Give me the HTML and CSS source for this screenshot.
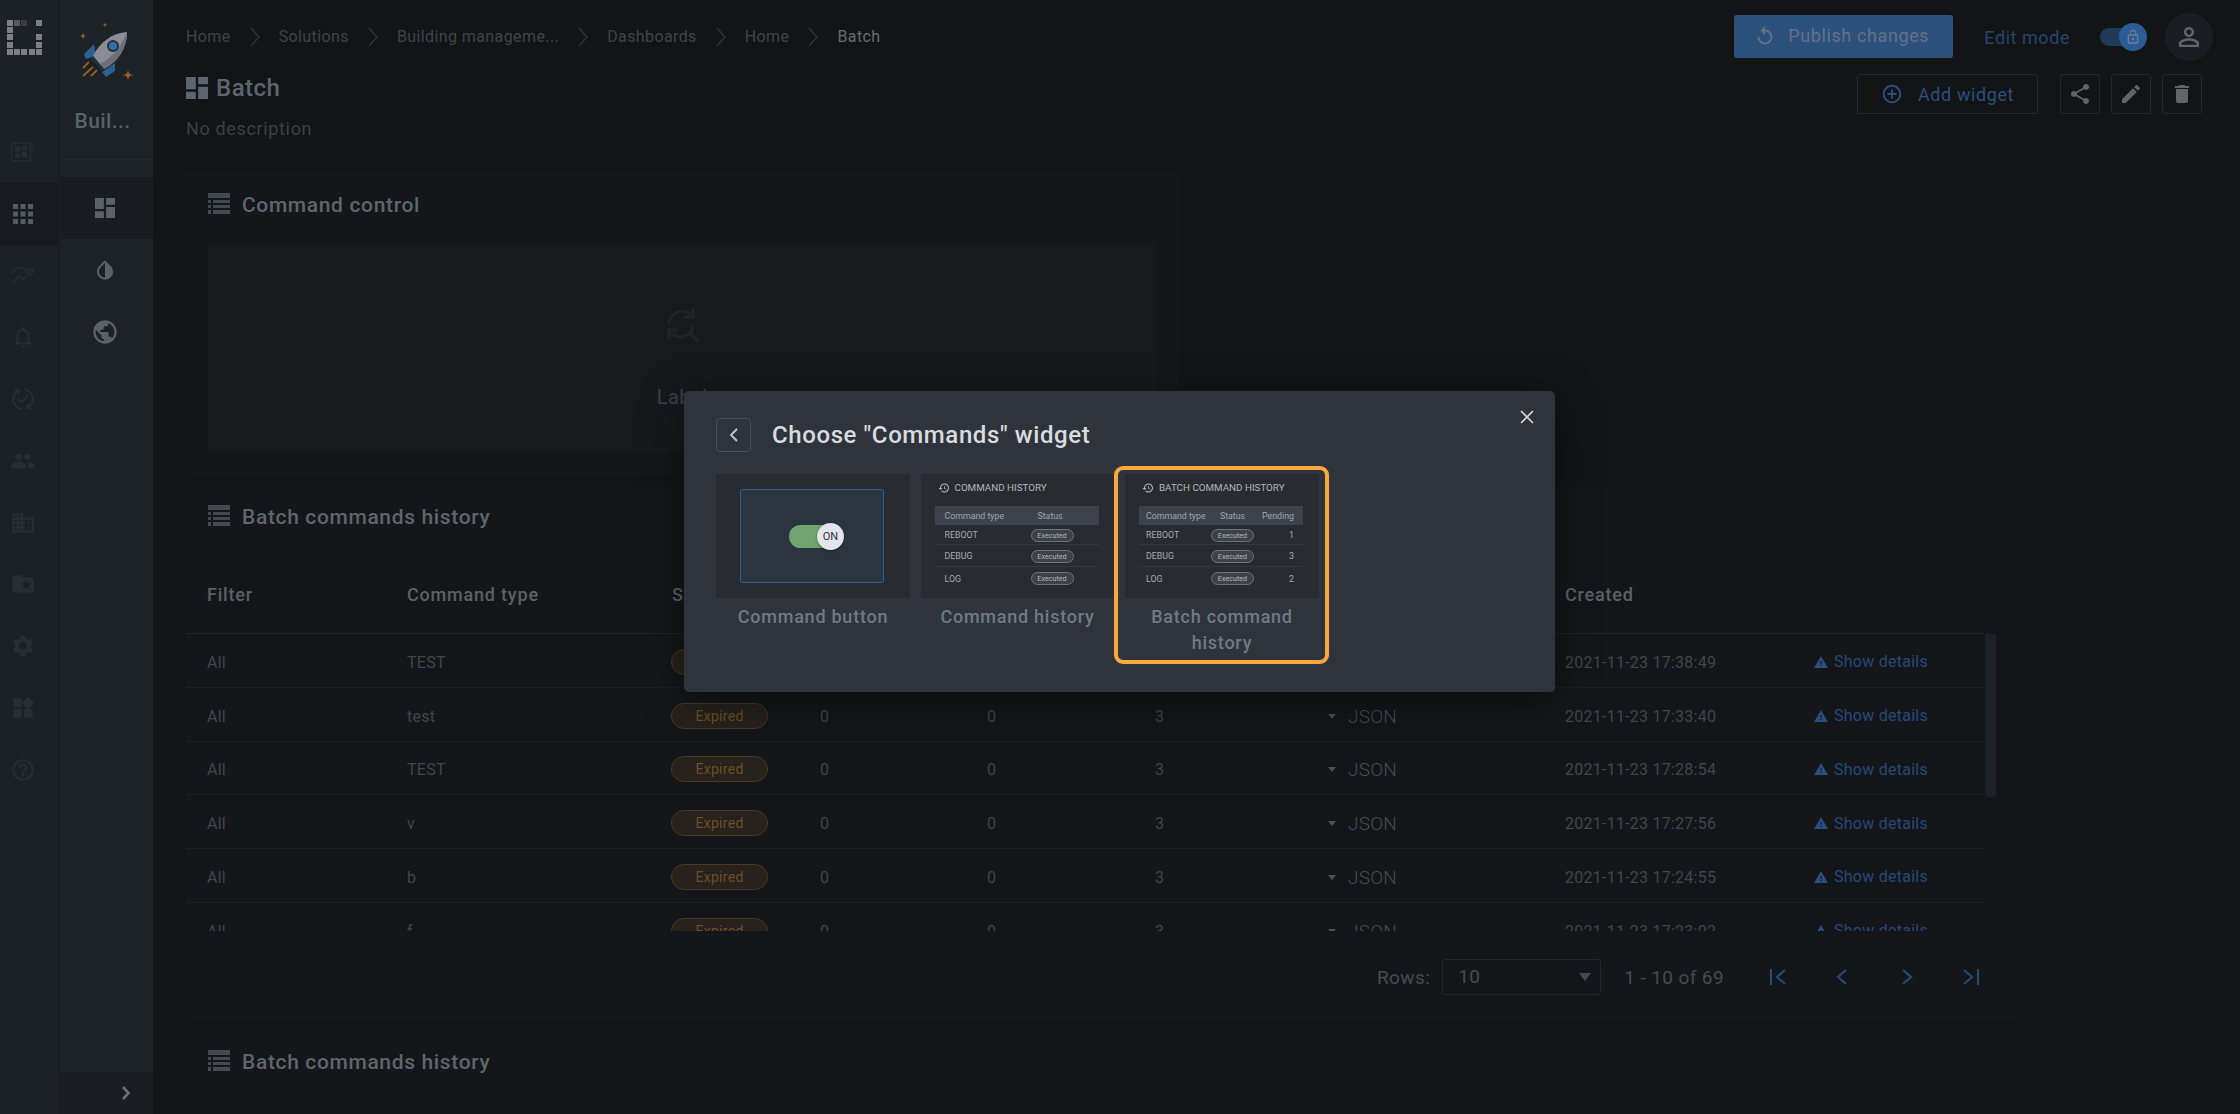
FILE: index.html
```html
<!DOCTYPE html>
<html>
<head>
    <meta charset="utf-8">
    <title>Batch</title>
    <link rel="stylesheet" href="styles.css">
</head>
<body>

<svg class="sprite" xmlns="http://www.w3.org/2000/svg">
    <symbol id="i-dash" viewBox="3 3 18 18"><path d="M3 13h8V3H3v10zm0 8h8v-6H3v6zm10 0h8V11h-8v10zm0-18v6h8V3h-8z"/></symbol>
    <symbol id="i-list" viewBox="0 0 22 22"><path d="M0 0h22v5H0zM0 7h3v3H0zM5 7h17v3H5zM0 12h3v3H0zM5 12h17v3H5zM0 17h3v4H0zM5 17h17v4H5z"/></symbol>
    <symbol id="i-drop" viewBox="0 0 24 24"><path d="M17.66 7.93L12 2.27 6.34 7.93c-3.12 3.12-3.12 8.19 0 11.31C7.9 20.8 9.95 21.58 12 21.58s4.1-.78 5.66-2.34c3.12-3.12 3.12-8.19 0-11.31zM12 19.59c-1.6 0-3.11-.62-4.24-1.76C6.62 16.69 6 15.19 6 13.59s.62-3.11 1.76-4.24L12 5.1v14.49z"/></symbol>
    <symbol id="i-globe" viewBox="0 0 24 24"><path d="M12 2C6.48 2 2 6.48 2 12s4.48 10 10 10 10-4.48 10-10S17.52 2 12 2zm-1 17.93c-3.95-.49-7-3.85-7-7.93 0-.62.08-1.21.21-1.79L9 15v1c0 1.1.9 2 2 2v1.93zm6.9-2.54c-.26-.81-1-1.39-1.9-1.39h-1v-3c0-.55-.45-1-1-1H8v-2h2c.55 0 1-.45 1-1V7h2c1.1 0 2-.9 2-2v-.41c2.93 1.19 5 4.06 5 7.41 0 2.08-.8 3.97-2.1 5.39z"/></symbol>
    <symbol id="i-warn" viewBox="1 2 22 19"><path d="M1 21h22L12 2 1 21zm12-3h-2v-2h2v2zm0-4h-2v-4h2v4z"/></symbol>
    <symbol id="i-history" viewBox="0 0 24 24"><path d="M13 3c-4.97 0-9 4.03-9 9H1l3.89 3.89.07.14L9 12H6c0-3.87 3.13-7 7-7s7 3.13 7 7-3.13 7-7 7c-1.93 0-3.68-.79-4.94-2.06l-1.42 1.42C8.27 19.99 10.51 21 13 21c4.97 0 9-4.03 9-9s-4.03-9-9-9zm-1 5v5l4.28 2.54.72-1.21-3.5-2.08V8H12z"/></symbol>
    <symbol id="i-chev" viewBox="0 0 10 20"><path d="M1 1l8 9-8 9" fill="none" stroke="currentColor" stroke-width="1.6"/></symbol>
</svg>

<div class="app">

    <nav class="rail">
        <div class="rail-logo">
            <svg width="35" height="35" viewBox="0 0 35 35">
                <g fill="#7d8083">
                    <rect x="0" y="0" width="6" height="6"/><rect x="29" y="0" width="6" height="6"/>
                    <rect x="0" y="7" width="6" height="6"/><rect x="0" y="14" width="6" height="6"/><rect x="0" y="22" width="6" height="6"/>
                    <rect x="0" y="29" width="6" height="6"/><rect x="7" y="29" width="6" height="6"/><rect x="14" y="29" width="6" height="6"/>
                    <rect x="22" y="29" width="6" height="6"/><rect x="29" y="29" width="6" height="6"/>
                    <rect x="29" y="14" width="6" height="6"/><rect x="29" y="22" width="6" height="6"/>
                </g>
                <rect x="7" y="0" width="6" height="6" fill="#565a5d"/>
                <rect x="14" y="0" width="6" height="6" fill="#3a3e41"/>
            </svg>
        </div>
        <a class="rail-item">
            <svg width="24" height="24" viewBox="0 0 24 24"><path d="M1.5 3h17a1 1 0 0 1 1 1v16a1 1 0 0 1-1 1h-17a1 1 0 0 1-1-1V4a1 1 0 0 1 1-1z" fill="none" stroke="currentColor" stroke-width="1.5"/><path d="M4 6.5h5v5H4zM11 6.5h5v3h-5zM4 13.5h5v4H4zM11 11.5h5v6h-5zM21 6h2v1.5h-2zM21 10h2v1.5h-2zM21 14h2v1.5h-2z" fill="currentColor"/></svg>
        </a>
        <a class="rail-item rail-active">
            <svg width="30" height="30" viewBox="0 0 24 24"><path fill="currentColor" d="M4 8h4V4H4v4zm6 12h4v-4h-4v4zm-6 0h4v-4H4v4zm0-6h4v-4H4v4zm6 0h4v-4h-4v4zm6-10v4h4V4h-4zm-6 4h4V4h-4v4zm6 6h4v-4h-4v4zm0 6h4v-4h-4v4z"/></svg>
        </a>
        <a class="rail-item">
            <svg width="24" height="24" viewBox="0 0 24 24" fill="none" stroke="currentColor" stroke-width="1.5"><path d="M1 10c3-5 7-6 10-5 3 1 6 4 10 8"/><path d="M1 20l7-7 4 3 10-9"/><path d="M17 6h5v5"/></svg>
        </a>
        <a class="rail-item">
            <svg width="26" height="26" viewBox="0 0 24 24"><path fill="currentColor" d="M12 22c1.1 0 2-.9 2-2h-4c0 1.1.9 2 2 2zm6-6v-5c0-3.07-1.63-5.64-4.5-6.32V4c0-.83-.67-1.5-1.5-1.5s-1.5.67-1.5 1.5v.68C7.64 5.36 6 7.92 6 11v5l-2 2v1h16v-1l-2-2zm-2 1H8v-6c0-2.48 1.51-4.5 4-4.5s4 2.02 4 4.5v6z"/></svg>
        </a>
        <a class="rail-item">
            <svg width="26" height="26" viewBox="0 0 24 24"><path fill="currentColor" d="M17.66 9.53l-7.07 7.07-4.24-4.24 1.41-1.41 2.83 2.83 5.66-5.66 1.41 1.41zM4 12c0-2.33 1.02-4.42 2.62-5.88L9 8.5v-6H3l2.2 2.2C3.24 6.52 2 9.11 2 12c0 5.19 3.95 9.45 9 9.95v-2.02c-3.94-.49-7-3.86-7-7.93zm18 0c0-5.19-3.95-9.45-9-9.95v2.02c3.94.49 7 3.86 7 7.93 0 2.33-1.02 4.42-2.62 5.88L15 15.5v6h6l-2.2-2.2c1.96-1.82 3.2-4.41 3.2-7.3z"/></svg>
        </a>
        <a class="rail-item">
            <svg width="26" height="26" viewBox="0 0 24 24"><path fill="currentColor" d="M16 11c1.66 0 2.99-1.34 2.99-3S17.66 5 16 5c-1.66 0-3 1.34-3 3s1.34 3 3 3zm-8 0c1.66 0 2.99-1.34 2.99-3S9.66 5 8 5C6.34 5 5 6.34 5 8s1.34 3 3 3zm0 2c-2.33 0-7 1.17-7 3.5V19h14v-2.5c0-2.33-4.67-3.5-7-3.5zm8 0c-.29 0-.62.02-.97.05 1.16.84 1.97 1.97 1.97 3.45V19h6v-2.5c0-2.33-4.67-3.5-7-3.5z"/></svg>
        </a>
        <a class="rail-item">
            <svg width="26" height="26" viewBox="0 0 24 24"><path fill="currentColor" d="M12 7V3H2v18h20V7H12zM6 19H4v-2h2v2zm0-4H4v-2h2v2zm0-4H4V9h2v2zm0-4H4V5h2v2zm4 12H8v-2h2v2zm0-4H8v-2h2v2zm0-4H8V9h2v2zm0-4H8V5h2v2zm10 12h-8v-2h2v-2h-2v-2h2v-2h-2V9h8v10zm-2-8h-2v2h2v-2zm0 4h-2v2h2v-2z"/></svg>
        </a>
        <a class="rail-item">
            <svg width="26" height="26" viewBox="0 0 24 24"><path fill="currentColor" d="M20 6h-8l-2-2H4c-1.1 0-2 .9-2 2v12c0 1.1.9 2 2 2h16c1.1 0 2-.9 2-2V8c0-1.1-.9-2-2-2zm-2.06 11L15 15.28 12.06 17l.78-3.33-2.59-2.24 3.41-.29L15 8l1.34 3.14 3.41.29-2.59 2.24.78 3.33z"/></svg>
        </a>
        <a class="rail-item">
            <svg width="26" height="26" viewBox="0 0 24 24"><path fill="currentColor" d="M19.14 12.94c.04-.3.06-.61.06-.94 0-.32-.02-.64-.07-.94l2.03-1.58c.18-.14.23-.41.12-.61l-1.92-3.32c-.12-.22-.37-.29-.59-.22l-2.39.96c-.5-.38-1.03-.7-1.62-.94l-.36-2.54c-.04-.24-.24-.41-.48-.41h-3.84c-.24 0-.43.17-.47.41l-.36 2.54c-.59.24-1.13.57-1.62.94l-2.39-.96c-.22-.08-.47 0-.59.22L2.74 8.87c-.12.21-.08.47.12.61l2.03 1.58c-.05.3-.09.63-.09.94s.02.64.07.94l-2.03 1.58c-.18.14-.23.41-.12.61l1.92 3.32c.12.22.37.29.59.22l2.39-.96c.5.38 1.03.7 1.62.94l.36 2.54c.05.24.24.41.48.41h3.84c.24 0 .44-.17.47-.41l.36-2.54c.59-.24 1.13-.56 1.62-.94l2.39.96c.22.08.47 0 .59-.22l1.92-3.32c.12-.22.07-.47-.12-.61l-2.01-1.58zM12 15.6c-1.98 0-3.6-1.62-3.6-3.6s1.62-3.6 3.6-3.6 3.6 1.62 3.6 3.6-1.62 3.6-3.6 3.6z"/></svg>
        </a>
        <a class="rail-item">
            <svg width="26" height="26" viewBox="0 0 24 24"><path fill="currentColor" d="M13 13v8h8v-8h-8zM3 21h8v-8H3v8zM3 3v8h8V3H3zm13.66-1.31L11 7.34 16.66 13l5.66-5.66-5.66-5.65z"/></svg>
        </a>
        <a class="rail-item">
            <svg width="26" height="26" viewBox="0 0 24 24"><path fill="currentColor" d="M11 18h2v-2h-2v2zm1-16C6.48 2 2 6.48 2 12s4.48 10 10 10 10-4.48 10-10S17.52 2 12 2zm0 18c-4.41 0-8-3.59-8-8s3.59-8 8-8 8 3.59 8 8-3.59 8-8 8zm0-14c-2.21 0-4 1.79-4 4h2c0-1.1.9-2 2-2s2 .9 2 2c0 2-3 1.75-3 5h2c0-2.25 3-2.5 3-5 0-2.21-1.79-4-4-4z"/></svg>
        </a>
    </nav>

    <aside class="side">
        <div class="side-top">
            <svg class="rocket" width="56" height="60" viewBox="78 22 56 60">
                <path fill="#2c5f92" d="M84 54l10-10 2 12-10 3zM102 72l13-9 0 8-9 6z"/>
                <path fill="#8b8c95" d="M127 32C112 33 100 42 93 56l11 13C118 62 127 48 127 32z"/>
                <path fill="#6d6e78" d="M127 32C127 48 118 62 104 69l-4-5C112 58 122 46 127 32z"/>
                <path fill="#23303d" d="M93 56l-2 3 11 12 2-2z"/>
                <circle cx="113" cy="46" r="6" fill="#23303d"/>
                <circle cx="113" cy="46" r="4" fill="#316fa8"/>
                <path stroke="#8a6126" stroke-width="2" fill="none" d="M83 68l6-6M83 76l10-9M91 76l6-6"/>
                <path fill="#8a6126" d="M83 32Q83 36 87 36 83 36 83 40 83 36 79 36 83 36 83 32zM105 22Q105 25 108 25 105 25 105 28 105 25 102 25 105 25 105 22z"/>
                <path fill="#97591f" d="M128 69Q128 75 134 75 128 75 128 81 128 75 122 75 128 75 128 69z"/>
            </svg>
            <div class="side-name">Buil...</div>
        </div>
        <div class="side-items">
            <a class="side-item side-active"><svg class="icon-20"><use href="#i-dash"/></svg></a>
            <a class="side-item"><svg class="icon-24"><use href="#i-drop"/></svg></a>
            <a class="side-item"><svg class="icon-28"><use href="#i-globe"/></svg></a>
        </div>
        <div class="side-foot">
            <svg width="10" height="14" viewBox="0 0 10 14"><path d="M2 1l5.5 6L2 13" fill="none" stroke="#6a6f73" stroke-width="2.6"/></svg>
        </div>
    </aside>

    <main class="main">
        <header class="topbar">
            <div class="crumbs">
                <a>Home</a><svg class="crumb-sep"><use href="#i-chev"/></svg>
                <a>Solutions</a><svg class="crumb-sep"><use href="#i-chev"/></svg>
                <a>Building manageme...</a><svg class="crumb-sep"><use href="#i-chev"/></svg>
                <a>Dashboards</a><svg class="crumb-sep"><use href="#i-chev"/></svg>
                <a>Home</a><svg class="crumb-sep"><use href="#i-chev"/></svg>
                <a class="crumb-last">Batch</a>
            </div>
            <div class="top-right">
                <button class="publish">
                    <svg width="22" height="22" viewBox="0 0 24 24"><path fill="currentColor" d="M12 5V1L7 6l5 5V7c3.31 0 6 2.69 6 6s-2.69 6-6 6-6-2.69-6-6H4c0 4.42 3.58 8 8 8s8-3.58 8-8-3.58-8-8-8z"/></svg>
                    Publish changes
                </button>
                <span class="edit-mode">Edit mode</span>
                <span class="switch">
                    <span class="switch-knob">
                        <svg width="16" height="16" viewBox="0 0 24 24"><path fill="#6f7f90" d="M12 17c1.1 0 2-.9 2-2s-.9-2-2-2-2 .9-2 2 .9 2 2 2zm6-9h-1V6c0-2.76-2.24-5-5-5S7 3.24 7 6h1.9c0-1.71 1.39-3.1 3.1-3.1 1.71 0 3.1 1.39 3.1 3.1v2H6c-1.1 0-2 .9-2 2v10c0 1.1.9 2 2 2h12c1.1 0 2-.9 2-2V10c0-1.1-.9-2-2-2zm0 12H6V10h12v10z"/></svg>
                    </span>
                </span>
                <span class="avatar">
                    <svg width="30" height="30" viewBox="0 0 24 24"><path fill="currentColor" d="M12 5.9c1.16 0 2.1.94 2.1 2.1s-.94 2.1-2.1 2.1S9.9 9.16 9.9 8s.94-2.1 2.1-2.1m0 9c2.97 0 6.1 1.46 6.1 2.1v1.1H5.9V17c0-.64 3.13-2.1 6.1-2.1M12 4C9.79 4 8 5.79 8 8s1.79 4 4 4 4-1.79 4-4-1.79-4-4-4zm0 9c-2.67 0-8 1.34-8 4v3h16v-3c0-2.66-5.33-4-8-4z"/></svg>
                </span>
            </div>
        </header>

        <section class="title-row">
            <div>
                <h1 class="page-title"><svg class="icon-22"><use href="#i-dash"/></svg>Batch</h1>
                <p class="page-desc">No description</p>
            </div>
            <div class="actions">
                <button class="add-widget">
                    <svg width="22" height="22" viewBox="0 0 24 24"><path fill="currentColor" d="M13 7h-2v4H7v2h4v4h2v-4h4v-2h-4V7zm-1-5C6.48 2 2 6.48 2 12s4.48 10 10 10 10-4.48 10-10S17.52 2 12 2zm0 18c-4.41 0-8-3.59-8-8s3.59-8 8-8 8 3.59 8 8-3.59 8-8 8z"/></svg>
                    Add widget
                </button>
                <button class="act-btn"><svg width="24" height="24" viewBox="0 0 24 24"><path fill="currentColor" d="M18 16.08c-.76 0-1.44.3-1.96.77L8.91 12.7c.05-.23.09-.46.09-.7s-.04-.47-.09-.7l7.05-4.11c.54.5 1.25.81 2.04.81 1.66 0 3-1.34 3-3s-1.34-3-3-3-3 1.34-3 3c0 .24.04.47.09.7L8.04 9.81C7.5 9.31 6.79 9 6 9c-1.66 0-3 1.34-3 3s1.34 3 3 3c.79 0 1.5-.31 2.04-.81l7.12 4.16c-.05.21-.08.43-.08.65 0 1.61 1.31 2.92 2.92 2.92 1.61 0 2.92-1.31 2.92-2.92s-1.31-2.92-2.92-2.92z"/></svg></button>
                <button class="act-btn"><svg width="24" height="24" viewBox="0 0 24 24"><path fill="currentColor" d="M3 17.25V21h3.75L17.81 9.94l-3.75-3.75L3 17.25zM20.71 7.04c.39-.39.39-1.02 0-1.41l-2.34-2.34c-.39-.39-1.02-.39-1.41 0l-1.83 1.83 3.75 3.75 1.83-1.83z"/></svg></button>
                <button class="act-btn"><svg width="24" height="24" viewBox="0 0 24 24"><path fill="currentColor" d="M6 19c0 1.1.9 2 2 2h8c1.1 0 2-.9 2-2V7H6v12zM19 4h-3.5l-1-1h-5l-1 1H5v2h14V4z"/></svg></button>
            </div>
        </section>

        <section class="panel panel-control">
            <h2 class="panel-title"><svg class="icon-list"><use href="#i-list"/></svg>Command control</h2>
            <div class="control-box">
                <svg class="control-icon" width="40" height="40" viewBox="0 0 40 40" fill="none" stroke="currentColor" stroke-width="3.4"><path d="M7 18a13 13 0 0 1 23-7"/><path d="M31 3v9h-9"/><path d="M31 20a12 12 0 0 1-21 8"/><path d="M7 34v-9h9"/><path d="M27 27l9 10"/></svg>
                <div class="control-label">Label</div>
            </div>
        </section>

        <section class="panel panel-table">
            <h2 class="panel-title"><svg class="icon-list"><use href="#i-list"/></svg>Batch commands history</h2>
            <div class="t-head">
                <span>Filter</span><span>Command type</span><span>Status</span><span></span><span></span><span></span><span></span><span>Created</span>
            </div>
            <div class="t-body">
                <div class="t-row">
                    <span>All</span><span>TEST</span><span><b class="pill">Expired</b></span><span>0</span><span>0</span><span>3</span>
                    <span class="json"><i class="caret"></i>JSON</span><span>2021-11-23 17:38:49</span>
                    <a class="details"><svg class="icon-warn"><use href="#i-warn"/></svg>Show details</a>
                </div>
                <div class="t-row">
                    <span>All</span><span>test</span><span><b class="pill">Expired</b></span><span>0</span><span>0</span><span>3</span>
                    <span class="json"><i class="caret"></i>JSON</span><span>2021-11-23 17:33:40</span>
                    <a class="details"><svg class="icon-warn"><use href="#i-warn"/></svg>Show details</a>
                </div>
                <div class="t-row">
                    <span>All</span><span>TEST</span><span><b class="pill">Expired</b></span><span>0</span><span>0</span><span>3</span>
                    <span class="json"><i class="caret"></i>JSON</span><span>2021-11-23 17:28:54</span>
                    <a class="details"><svg class="icon-warn"><use href="#i-warn"/></svg>Show details</a>
                </div>
                <div class="t-row">
                    <span>All</span><span>v</span><span><b class="pill">Expired</b></span><span>0</span><span>0</span><span>3</span>
                    <span class="json"><i class="caret"></i>JSON</span><span>2021-11-23 17:27:56</span>
                    <a class="details"><svg class="icon-warn"><use href="#i-warn"/></svg>Show details</a>
                </div>
                <div class="t-row">
                    <span>All</span><span>b</span><span><b class="pill">Expired</b></span><span>0</span><span>0</span><span>3</span>
                    <span class="json"><i class="caret"></i>JSON</span><span>2021-11-23 17:24:55</span>
                    <a class="details"><svg class="icon-warn"><use href="#i-warn"/></svg>Show details</a>
                </div>
                <div class="t-row">
                    <span>All</span><span>f</span><span><b class="pill">Expired</b></span><span>0</span><span>0</span><span>3</span>
                    <span class="json"><i class="caret"></i>JSON</span><span>2021-11-23 17:23:02</span>
                    <a class="details"><svg class="icon-warn"><use href="#i-warn"/></svg>Show details</a>
                </div>
                <div class="t-scroll"></div>
            </div>
            <div class="t-foot">
                <span>Rows:</span>
                <span class="rows-select">10<i class="select-caret"></i></span>
                <span class="rows-range">1 - 10 of 69</span>
                <span class="pager">
                    <svg width="20" height="20" viewBox="0 0 20 20"><path d="M3 2v16M17 3l-8 7 8 7" fill="none" stroke="currentColor" stroke-width="2.2"/></svg>
                    <svg width="20" height="20" viewBox="0 0 20 20"><path d="M14 3l-8 7 8 7" fill="none" stroke="currentColor" stroke-width="2.2"/></svg>
                    <svg width="20" height="20" viewBox="0 0 20 20"><path d="M6 3l8 7-8 7" fill="none" stroke="currentColor" stroke-width="2.2"/></svg>
                    <svg width="20" height="20" viewBox="0 0 20 20"><path d="M17 2v16M3 3l8 7-8 7" fill="none" stroke="currentColor" stroke-width="2.2"/></svg>
                </span>
            </div>
        </section>

        <section class="panel panel-last">
            <h2 class="panel-title"><svg class="icon-list"><use href="#i-list"/></svg>Batch commands history</h2>
        </section>
    </main>
</div>

<!-- dialog sits over the dimmed page -->
<div class="dialog">
    <button class="dialog-close">
        <svg width="14" height="14" viewBox="0 0 14 14"><path d="M1 1l12 12M13 1L1 13" stroke="#d5d8dc" stroke-width="1.6"/></svg>
    </button>
    <div class="dialog-head">
        <button class="back-btn"><svg width="10" height="14" viewBox="0 0 10 14"><path d="M8 1L2 7l6 6" fill="none" stroke="#c6cacf" stroke-width="1.8"/></svg></button>
        <h3 class="dialog-title">Choose "Commands" widget</h3>
    </div>
    <div class="cards">
        <div class="card">
            <div class="thumb thumb-btn">
                <div class="btn-preview">
                    <span class="toggle"><span class="toggle-knob">ON</span></span>
                </div>
            </div>
            <div class="card-label">Command button</div>
        </div>
        <div class="card">
            <div class="thumb">
                <div class="mini-title"><svg class="icon-hist"><use href="#i-history"/></svg>COMMAND HISTORY</div>
                <div class="mini-head mini-two"><span>Command type</span><span>Status</span></div>
                <div class="mini-row mini-two"><span>REBOOT</span><b class="mini-pill">Executed</b></div>
                <div class="mini-row mini-two"><span>DEBUG</span><b class="mini-pill">Executed</b></div>
                <div class="mini-row mini-two"><span>LOG</span><b class="mini-pill">Executed</b></div>
            </div>
            <div class="card-label">Command history</div>
        </div>
        <div class="card card-selected">
            <div class="thumb">
                <div class="mini-title"><svg class="icon-hist"><use href="#i-history"/></svg>BATCH COMMAND HISTORY</div>
                <div class="mini-head mini-three"><span>Command type</span><span class="mini-mid">Status</span><span class="mini-end">Pending</span></div>
                <div class="mini-row mini-three"><span>REBOOT</span><b class="mini-pill">Executed</b><span class="mini-end">1</span></div>
                <div class="mini-row mini-three"><span>DEBUG</span><b class="mini-pill">Executed</b><span class="mini-end">3</span></div>
                <div class="mini-row mini-three"><span>LOG</span><b class="mini-pill">Executed</b><span class="mini-end">2</span></div>
            </div>
            <div class="card-label">Batch command history</div>
        </div>
    </div>
</div>

</body>
</html>
```

FILE: styles.css
```css
html, body {
    margin: 0;
    padding: 0;
    height: 100%;
    overflow: hidden;
    background-color: #131416;
    font-family: Roboto, "Liberation Sans", sans-serif;
    color: #41464b;
}

h1, h2, h3, p {
    margin: 0;
    font-weight: 500;
}

button {
    font-family: inherit;
    background: none;
    cursor: pointer;
    padding: 0;
}

.sprite {
    display: none;
}

.app {
    display: flex;
    height: 1114px;
}

/* left rail */
.rail {
    width: 58px;
    flex: none;
    background-color: #1b2125;
    border-right: 2px solid #191e22;
    color: #272d31;
}

.rail-logo {
    height: 121px;
    box-sizing: border-box;
    padding: 20px 0 0 7px;
}

.rail-item {
    display: flex;
    align-items: center;
    justify-content: center;
    height: 61.8px;
    padding-right: 12px;
}

.rail-active {
    background-color: #171b1f;
    color: #545b61;
}

/* second sidebar */
.side {
    width: 93px;
    flex: none;
    display: flex;
    flex-direction: column;
    background-color: #1c2226;
}

.side-top {
    height: 160px;
    box-sizing: border-box;
    border-bottom: 1px solid #23292d;
    text-align: center;
    padding-top: 22px;
}

.rocket {
    display: block;
    margin-left: 18px;
}

.side-name {
    margin-top: 27px;
    padding-right: 8px;
    font-size: 21px;
    font-weight: 500;
    letter-spacing: .4px;
    color: #5a626a;
}

.side-items {
    flex: 1;
    padding-top: 17px;
    color: #5a626a;
}

.side-item {
    display: flex;
    align-items: center;
    justify-content: center;
    height: 62px;
    padding-right: 4px;
}

.side-active {
    background-color: #191d22;
}

.side-foot {
    height: 42px;
    background-color: #1a1e22;
    display: flex;
    align-items: center;
    justify-content: flex-end;
    padding-right: 22px;
}

.icon-20, .icon-22, .icon-24, .icon-28 {
    fill: currentColor;
}

.icon-20 { width: 20px; height: 20px; }
.icon-22 { width: 22px; height: 22px; }
.icon-24 { width: 24px; height: 24px; }
.icon-28 { width: 28px; height: 28px; }

/* main column */
.main {
    flex: 1;
    min-width: 0;
    padding-left: 33px;
    overflow: hidden;
}

.topbar {
    height: 73px;
    display: flex;
    align-items: center;
    justify-content: space-between;
    padding-right: 27px;
}

.crumbs {
    display: flex;
    align-items: center;
    font-size: 16px;
    letter-spacing: .4px;
    color: #3f444a;
}

.crumb-sep {
    width: 10px;
    height: 20px;
    margin: 0 19px;
    color: #2e3236;
}

.crumb-last {
    color: #686d72;
}

.top-right {
    display: flex;
    align-items: center;
}

.publish {
    width: 219px;
    height: 43px;
    display: flex;
    align-items: center;
    gap: 12px;
    padding-left: 20px;
    padding-bottom: 2px;
    border: 0;
    border-radius: 3px;
    background-color: #2c517d;
    color: #657084;
    font-size: 18px;
    letter-spacing: .6px;
}

.edit-mode {
    margin-left: 31px;
    margin-top: 2px;
    font-size: 18px;
    letter-spacing: .55px;
    color: #25466f;
}

.switch {
    position: relative;
    width: 35px;
    height: 18px;
    margin-left: 30px;
    border-radius: 9px;
    background-color: #1f3a58;
}

.switch-knob {
    position: absolute;
    left: 19px;
    top: -5px;
    width: 28px;
    height: 28px;
    border-radius: 50%;
    background-color: #2c5c96;
    display: flex;
    align-items: center;
    justify-content: center;
}

.avatar {
    width: 48px;
    height: 48px;
    margin-left: 30px;
    border-radius: 50%;
    background-color: #1a1d21;
    color: #5e656b;
    display: flex;
    align-items: center;
    justify-content: center;
}

.title-row {
    display: flex;
    justify-content: space-between;
    padding-right: 38px;
    height: 99px;
}

.page-title {
    display: flex;
    align-items: center;
    gap: 8px;
    height: 30px;
    font-size: 24px;
    letter-spacing: .5px;
    color: #5d6670;
}

.page-desc {
    margin-top: 13px;
    font-size: 18px;
    line-height: 26px;
    font-weight: 400;
    letter-spacing: .65px;
    color: #3c4046;
}

.actions {
    display: flex;
    gap: 11px;
    margin-top: 1px;
    height: 40px;
}

.add-widget {
    width: 181px;
    height: 40px;
    margin-right: 11px;
    display: flex;
    align-items: center;
    gap: 15px;
    padding-left: 23px;
    border: 1px solid #1a2c3a;
    border-radius: 3px;
    color: #2a4f7e;
    font-size: 18px;
    letter-spacing: .6px;
}

.act-btn {
    width: 40px;
    height: 40px;
    border: 1px solid #24272b;
    border-radius: 3px;
    color: #5e656b;
    display: flex;
    align-items: center;
    justify-content: center;
}

/* panels */
.panel {
    box-sizing: border-box;
    background-color: #141619;
}

.panel-title {
    display: flex;
    align-items: center;
    gap: 12px;
    height: 22px;
    font-size: 21px;
    letter-spacing: .65px;
    color: #5f666d;
}

.icon-list {
    width: 22px;
    height: 22px;
    margin-top: -2px;
    fill: #434a51;
}

.panel-control {
    width: 994px;
    height: 303px;
    margin-left: -1px;
    padding: 22px 23px 23px 23px;
}

.control-box {
    height: 209px;
    margin-top: 27px;
    background-color: #161a1d;
    display: flex;
    flex-direction: column;
    align-items: center;
}

.control-icon {
    margin-top: 62px;
    color: #1f2427;
}

.control-label {
    margin-top: 40px;
    font-size: 20px;
    letter-spacing: .4px;
    color: #3c4146;
}

.panel-table {
    position: relative;
    width: 1829px;
    height: 534px;
    margin-top: 11px;
    padding-top: 20px;
}

.panel-table .panel-title,
.panel-last .panel-title {
    margin-left: 22px;
}

.t-head, .t-row {
    display: grid;
    grid-template-columns: 200px 265px 148px 167px 168px 173px 237px 249px 1fr;
    align-items: center;
    padding-left: 21px;
    font-size: 16px;
    width: 1798px;
    box-sizing: border-box;
}

.t-head {
    height: 106px;
    padding-top: 28px;
    border-bottom: 1px solid #1e2327;
    font-size: 18px;
    font-weight: 500;
    letter-spacing: .8px;
    color: #5c6167;
}

.t-body {
    position: relative;
    width: 1810px;
    height: 297px;
    overflow: hidden;
}

.t-row {
    height: 53.75px;
    padding-top: 4px;
    border-bottom: 1px solid #1c2024;
    color: #41464b;
    letter-spacing: .25px;
}

.t-scroll {
    position: absolute;
    right: 0;
    top: 0;
    width: 11px;
    height: 163px;
    border-radius: 0 0 3px 3px;
    background-color: #1d2226;
}

.pill {
    display: block;
    width: 97px;
    height: 26px;
    margin: -1px 0 0 -1px;
    box-sizing: border-box;
    border: 1px solid #4a3820;
    border-radius: 13px;
    background-color: #27221c;
    color: #6e5028;
    font-weight: 400;
    font-size: 14px;
    line-height: 24px;
    text-align: center;
    letter-spacing: .3px;
}

.json {
    display: flex;
    align-items: center;
    font-size: 19px;
    font-weight: 300;
    letter-spacing: .2px;
    color: #484d52;
}

.caret {
    width: 0;
    height: 0;
    margin-right: 12px;
    border-left: 4.5px solid transparent;
    border-right: 4.5px solid transparent;
    border-top: 5px solid #4c5156;
}

.details {
    display: flex;
    align-items: center;
    gap: 6px;
    margin-top: -1px;
    font-size: 16px;
    letter-spacing: .25px;
    color: #26497a;
}

.icon-warn {
    width: 14px;
    height: 12px;
    fill: #2a4f80;
}

.t-foot {
    display: flex;
    align-items: center;
    height: 36px;
    margin-top: 28px;
    padding-left: 1191px;
    font-size: 19px;
    letter-spacing: .4px;
    color: #464b51;
}

.rows-select {
    position: relative;
    width: 159px;
    height: 36px;
    margin-left: 12px;
    padding-left: 15px;
    box-sizing: border-box;
    border: 1px solid #24272b;
    border-radius: 3px;
    line-height: 34px;
}

.select-caret {
    position: absolute;
    right: 9px;
    top: 13px;
    width: 0;
    height: 0;
    border-left: 6.5px solid transparent;
    border-right: 6.5px solid transparent;
    border-top: 8px solid #464b51;
}

.rows-range {
    margin-left: 23px;
}

.pager {
    display: flex;
    gap: 44.3px;
    margin-left: 44px;
    color: #26497a;
}

.panel-last {
    width: 1829px;
    height: 84px;
    margin-top: 10px;
    padding-top: 21px;
}

/* dialog */
.dialog {
    position: absolute;
    left: 684px;
    top: 391px;
    width: 871px;
    height: 301px;
    box-sizing: border-box;
    padding: 27px 32px;
    border-radius: 5px;
    background-color: #2f343c;
    box-shadow: 0 10px 45px rgba(0, 0, 0, .45);
}

.dialog-close {
    position: absolute;
    right: 21px;
    top: 19px;
    border: 0;
    line-height: 0;
}

.dialog-head {
    display: flex;
    align-items: center;
    gap: 21px;
    height: 34px;
}

.back-btn {
    width: 35px;
    height: 34px;
    border: 1px solid #474d55;
    border-radius: 4px;
    line-height: 0;
}

.dialog-title {
    font-size: 24px;
    letter-spacing: .6px;
    color: #d9dcdf;
}

.cards {
    display: flex;
    gap: 10.5px;
    margin-top: 22px;
}

.card {
    position: relative;
    width: 194px;
}

.card-selected::after {
    content: "";
    position: absolute;
    left: -11px;
    right: -10px;
    top: -8px;
    height: 198px;
    box-sizing: border-box;
    border: 4px solid #f8a93e;
    border-radius: 9px;
}

.thumb {
    box-sizing: border-box;
    height: 124px;
    padding-left: 14px;
    padding-right: 16px;
    background-color: #282c30;
    color: #a6abb1;
    font-size: 8.8px;
}

.thumb-btn {
    padding: 15px 26px 15px 24px;
}

.btn-preview {
    height: 94px;
    box-sizing: border-box;
    border: 1px solid #2f5f8f;
    border-radius: 3px;
    background-color: #2b3540;
    display: flex;
    align-items: center;
    justify-content: center;
}

.toggle {
    position: relative;
    width: 45px;
    height: 23px;
    margin-left: 9px;
    margin-right: 10px;
    border-radius: 12px;
    background-color: #72a472;
}

.toggle-knob {
    position: absolute;
    right: -10px;
    top: -2px;
    width: 27px;
    height: 27px;
    border-radius: 50%;
    background-color: #e2e5ea;
    box-shadow: 0 1px 3px rgba(0, 0, 0, .4);
    color: #2f3338;
    font-size: 11px;
    font-weight: 400;
    line-height: 27px;
    text-align: center;
}

.mini-title {
    display: flex;
    align-items: center;
    gap: 5px;
    height: 32px;
    box-sizing: border-box;
    padding: 0 0 5px 3px;
    font-size: 9.8px;
    color: #b1b6bc;
}

.icon-hist {
    width: 12px;
    height: 12px;
    fill: #b1b6bc;
}

.mini-head, .mini-row {
    display: grid;
    align-items: center;
    padding-right: 9px;
}

.mini-two {
    grid-template-columns: 86px 43px;
    padding-left: 10px;
}

.mini-three {
    grid-template-columns: 65px 43px 1fr;
    padding-left: 7px;
}

.mini-head {
    height: 19px;
    background-color: #3c434c;
    color: #a0a6ad;
}

.mini-row {
    height: 22px;
    border-bottom: 1px solid #33383e;
    box-sizing: border-box;
}

.mini-row span {
    padding-top: 1px;
}

.mini-head + .mini-row {
    height: 20px;
}

.mini-row:last-child {
    border-bottom: 0;
}

.mini-two.mini-head span:last-child {
    padding-left: 7px;
}

.mini-mid {
    text-align: center;
}

.mini-end {
    text-align: right;
}

.mini-pill {
    display: block;
    height: 13px;
    margin-top: 1px;
    box-sizing: border-box;
    border: 1px solid #6e747b;
    border-radius: 7px;
    background-color: #3d4248;
    color: #b4b8bd;
    font-size: 7.2px;
    font-weight: 400;
    line-height: 11px;
    text-align: center;
}

.card-label {
    margin-top: 6px;
    padding: 0 6px;
    font-size: 18px;
    font-weight: 500;
    line-height: 26px;
    letter-spacing: .75px;
    text-align: center;
    color: #6f7a84;
}
```
